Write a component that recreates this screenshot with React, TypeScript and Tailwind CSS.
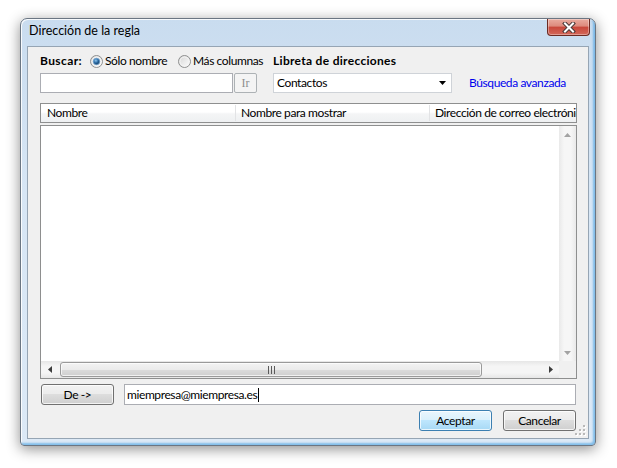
import { useId } from 'react';
import clsx from 'clsx';

function Radio({ checked }: { checked?: boolean }) {
  const id = useId();
  return (
    <svg width="13" height="13" viewBox="0 0 13 13" className="shrink-0">
      <defs>
        <linearGradient id={`${id}-bg`} x1="0" y1="0" x2="1" y2="1">
          <stop offset="0" stopColor="#d4d4d4" />
          <stop offset="1" stopColor="#ffffff" />
        </linearGradient>
        <radialGradient id={`${id}-dot`} cx="0.4" cy="0.35" r="0.7">
          <stop offset="0" stopColor="#8fc6ee" />
          <stop offset="0.5" stopColor="#2b6aa3" />
          <stop offset="1" stopColor="#0c2c4b" />
        </radialGradient>
      </defs>
      <circle cx="6.5" cy="6.5" r="6" fill={`url(#${id}-bg)`} stroke="#8e8f8f" />
      <circle cx="6.5" cy="6.5" r="4.5" fill="none" stroke="#f4f4f4" strokeWidth="1" />
      {checked && <circle cx="6.5" cy="6.5" r="3.2" fill={`url(#${id}-dot)`} stroke="#6aa2d4" strokeWidth="0.8" />}
    </svg>
  );
}

function Button({
  children,
  primary,
  className,
}: {
  children: React.ReactNode;
  primary?: boolean;
  className?: string;
}) {
  return (
    <button
      className={clsx(
        'h-[21px] w-[73px] whitespace-nowrap rounded-[3px] border text-[12px] leading-none text-black shadow-[inset_0_0_0_1px_rgba(255,255,255,0.75)]',
        primary
          ? 'border-[#3c7fb1] bg-[linear-gradient(180deg,#eaf6fd_0%,#d9f0fc_50%,#bee6fd_50%,#a7d9f5_100%)]'
          : 'border-[#707070] bg-[linear-gradient(180deg,#f2f2f2_0%,#ebebeb_50%,#dddddd_50%,#cfcfcf_100%)]',
        className,
      )}
    >
      {children}
    </button>
  );
}

function Arrow({ dir, color }: { dir: 'up' | 'down' | 'left' | 'right'; color: string }) {
  const points = {
    up: '0,4 3.5,0 7,4',
    down: '0,0 3.5,4 7,0',
    left: '4,0 0,3.5 4,7',
    right: '0,0 4,3.5 0,7',
  }[dir];
  const vertical = dir === 'up' || dir === 'down';
  return (
    <svg width={vertical ? 7 : 4} height={vertical ? 4 : 7} viewBox={vertical ? '0 0 7 4' : '0 0 4 7'}>
      <polygon points={points} fill={color} />
    </svg>
  );
}

function CloseButton() {
  return (
    <div className="mr-[5px] flex h-[17px] w-[43px] items-center justify-center rounded-b-[4px] border border-t-0 border-[#6b2a22] bg-[linear-gradient(180deg,#e9ab9f_0%,#dd8a7c_45%,#c8473a_50%,#d3685a_100%)] shadow-[inset_0_0_0_1px_rgba(255,255,255,0.35)]">
      <svg width="14" height="11" viewBox="0 0 14 11">
        <path d="M3 1.5 L11 9.5 M11 1.5 L3 9.5" stroke="#4a3a38" strokeWidth="4" strokeLinecap="square" />
        <path d="M3 1.5 L11 9.5 M11 1.5 L3 9.5" stroke="#ffffff" strokeWidth="2" strokeLinecap="square" />
      </svg>
    </div>
  );
}

function SizeGrip() {
  const dots = [
    [9, 1],
    [9, 5],
    [5, 5],
    [9, 9],
    [5, 9],
    [1, 9],
  ];
  return (
    <svg width="12" height="12" viewBox="0 0 12 12" className="absolute bottom-[2px] right-[2px]">
      {dots.map(([x, y]) => (
        <g key={`${x}-${y}`}>
          <rect x={x + 1} y={y + 1} width="2" height="2" fill="#ffffff" />
          <rect x={x} y={y} width="2" height="2" fill="#b9b9b9" />
        </g>
      ))}
    </svg>
  );
}

export default function App() {
  return (
    <div className="min-h-[468px] w-[617px] whitespace-nowrap bg-white pl-[20px] pt-[18px] font-['Lato','Noto_Sans',sans-serif] text-[12px] tracking-[-0.4px] text-black">
      {/* Window frame */}
      <div className="flex h-[428px] w-[576px] flex-col rounded-t-[7px] rounded-b-[4px] border border-[#6b7683] bg-[linear-gradient(180deg,#c9dcef_0%,#d7e6f5_40%,#dce9f6_100%)] shadow-[0_3px_14px_rgba(0,0,0,0.45),inset_-2px_-2px_2px_rgba(70,160,225,0.6),inset_1px_1px_0_rgba(255,255,255,0.85)]">
        {/* Title bar */}
        <div className="flex h-[27px] shrink-0 items-start justify-between">
          <div className="pl-[8px] pt-[4px] text-[12.5px] leading-[16px] tracking-normal">Dirección de la regla</div>
          <CloseButton />
        </div>

        {/* Client area */}
        <div className="relative mx-[6px] h-[393px] border border-[#96a5b4] bg-[#f0f0f0] pl-[12px] pr-[11px] pt-[6px]">
          {/* Search options */}
          <div className="flex h-[16px] items-center leading-[16px]">
            <div className="flex w-[233px] items-center">
              <span className="w-[50px] font-bold tracking-[0.4px]">Buscar:</span>
              <Radio checked />
              <span className="ml-[2px] w-[73px]">Sólo nombre</span>
              <Radio />
              <span className="ml-[2px]">Más columnas</span>
            </div>
            <span className="font-bold tracking-[0.3px]">Libreta de direcciones</span>
          </div>

          <div className="mt-[4px] flex h-[20px] items-stretch">
            <div className="flex w-[233px]">
              <div className="w-[193px] border border-[#abadb3] bg-white" />
              <div className="ml-[1px] flex w-[23px] items-center justify-center rounded-[2px] border border-[#adb2b5] bg-[#f4f4f4] font-['Liberation_Serif',serif] text-[12px] tracking-normal text-[#8d8d8d]">
                Ir
              </div>
            </div>
            <div className="flex w-[179px] items-center justify-between border border-[#cfd3d8] bg-white pl-[3px] pr-[5px]">
              <span>Contactos</span>
              <Arrow dir="down" color="#000000" />
            </div>
            <span className="ml-[17px] self-center text-[#0000ee]">Búsqueda avanzada</span>
          </div>

          {/* Column header */}
          <div className="mt-[10px] flex h-[20px] items-center border border-[#8e8f8f] bg-[linear-gradient(180deg,#ffffff_0%,#ffffff_45%,#f4f5f6_55%,#eef0f2_100%)] leading-[16px]">
            <div className="w-[195px] shrink-0 border-r border-[#e2e3e5] pl-[6px]">Nombre</div>
            <div className="w-[194px] shrink-0 border-r border-[#e2e3e5] pl-[5px]">Nombre para mostrar</div>
            <div className="min-w-0 flex-1 overflow-hidden pl-[5px]">Dirección de correo electrónic</div>
          </div>

          {/* List body */}
          <div className="mt-[2px] flex h-[254px] flex-col border border-[#8e8f8f] bg-white">
            <div className="flex min-h-0 flex-1">
              <div className="flex-1" />
              <div className="flex w-[17px] flex-col bg-[linear-gradient(90deg,#e9e9e9_0%,#f6f6f6_30%,#f6f6f6_70%,#e9e9e9_100%)]">
                <div className="flex h-[17px] items-center justify-center">
                  <Arrow dir="up" color="#a3a3a3" />
                </div>
                <div className="flex-1" />
                <div className="flex h-[17px] items-center justify-center">
                  <Arrow dir="down" color="#a3a3a3" />
                </div>
              </div>
            </div>
            <div className="flex h-[17px] shrink-0">
              <div className="flex flex-1 items-stretch bg-[linear-gradient(180deg,#e6e6e6_0%,#f5f5f5_30%,#f5f5f5_70%,#e6e6e6_100%)]">
                <div className="flex w-[17px] items-center justify-center">
                  <Arrow dir="left" color="#3c3c3c" />
                </div>
                <div className="my-[1px] ml-[2px] flex w-[422px] items-center justify-center rounded-[3px] border border-[#9a9a9a] bg-[linear-gradient(180deg,#f3f3f3_0%,#ebebeb_50%,#dcdcdc_50%,#cfcfcf_100%)] shadow-[inset_0_0_0_1px_rgba(255,255,255,0.7)]">
                  <svg width="7" height="8" viewBox="0 0 7 8">
                    <rect x="0" y="0" width="1" height="8" fill="#5a5a5a" />
                    <rect x="3" y="0" width="1" height="8" fill="#5a5a5a" />
                    <rect x="6" y="0" width="1" height="8" fill="#5a5a5a" />
                  </svg>
                </div>
                <div className="flex-1" />
                <div className="flex w-[17px] items-center justify-center">
                  <Arrow dir="right" color="#3c3c3c" />
                </div>
              </div>
              <div className="w-[17px] bg-[#f0f0f0]" />
            </div>
          </div>

          {/* Sender row */}
          <div className="mt-[5px] flex h-[21px]">
            <Button className="ml-[1px]">De -&gt;</Button>
            <div className="ml-[10px] mr-[1px] flex flex-1 items-center border border-[#abadb3] bg-white pl-[2px] leading-[16px]">
              <span>miempresa@miempresa.es</span>
              <span className="ml-px h-[14px] w-px bg-black" />
            </div>
          </div>

          {/* Dialog buttons */}
          <div className="mt-[5px] flex h-[21px] justify-end pr-[1px]">
            <Button primary>Aceptar</Button>
            <Button className="ml-[11px]">Cancelar</Button>
          </div>

          <SizeGrip />
        </div>
      </div>
    </div>
  );
}
